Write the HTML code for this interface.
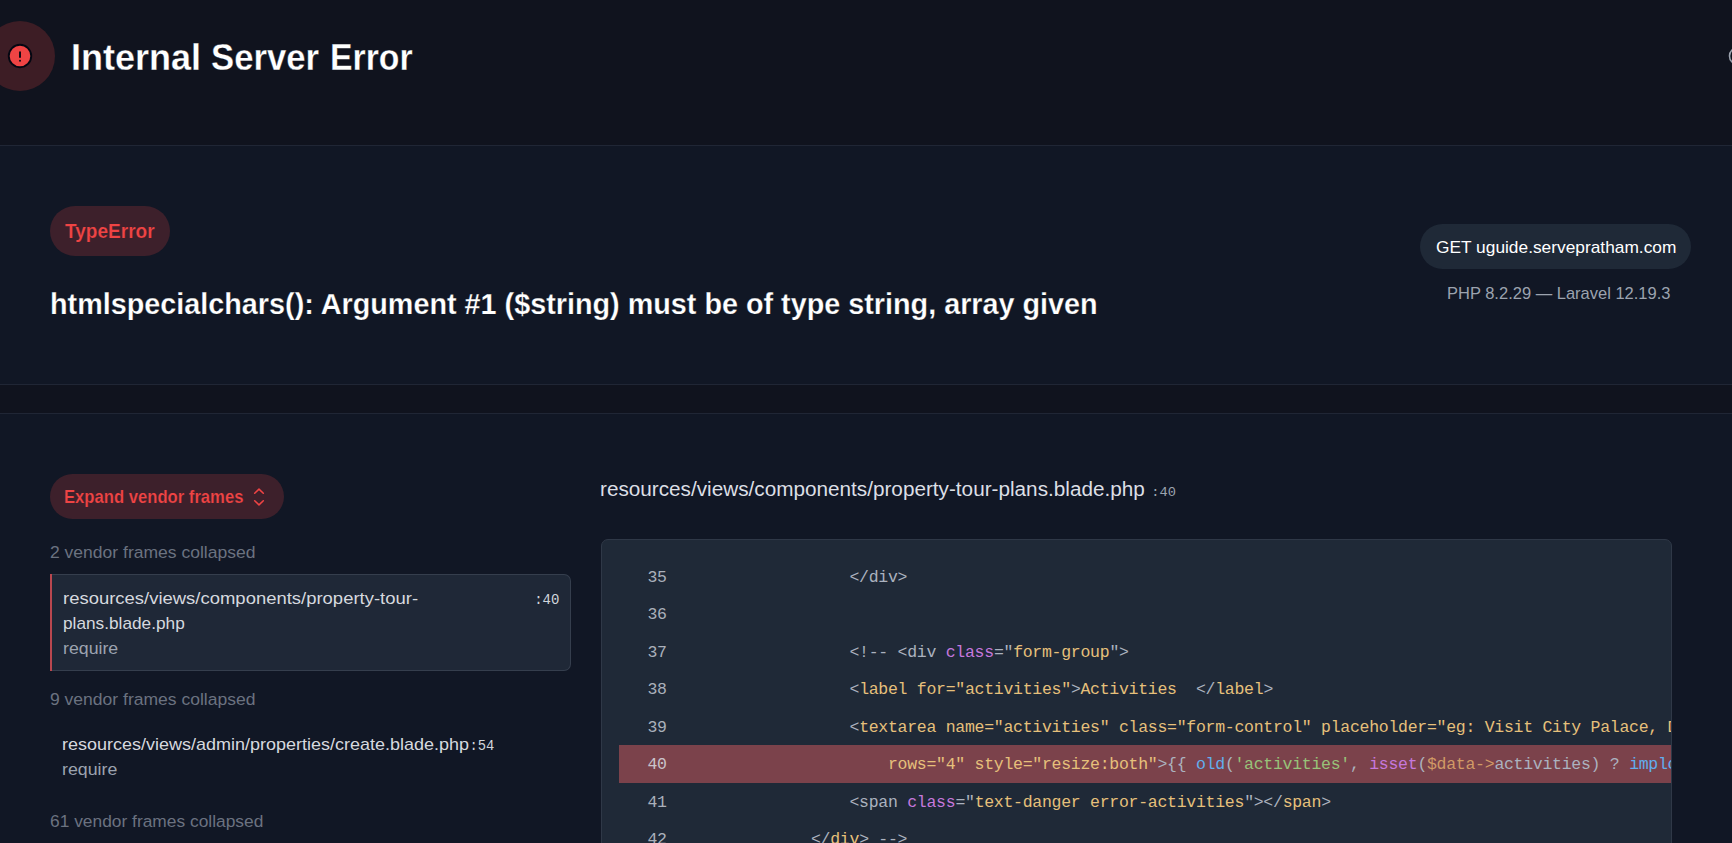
<!DOCTYPE html>
<html lang="en">
<head>
<meta charset="utf-8">
<title>Internal Server Error</title>
<style>
*{box-sizing:border-box;margin:0;padding:0}
html,body{width:1732px;height:843px;overflow:hidden;background:#10131e}
body{position:relative;font-family:"Liberation Sans",sans-serif;color:#fff}
.abs{position:absolute}
.t{position:absolute;white-space:nowrap;line-height:1;transform-origin:0 0}
.mono{font-family:"Liberation Mono","DejaVu Sans Mono",monospace}
#hdr{left:0;top:0;width:1732px;height:145px;background:#10131e}
#sec2{left:0;top:145px;width:1732px;height:240px;background:#111725;border-top:1px solid #202635;border-bottom:1px solid #202635}
#sec3{left:0;top:413px;width:1732px;height:430px;background:#111725;border-top:1px solid #202635}
#bigc{left:-15.5px;top:20.75px;width:70px;height:70px;border-radius:50%;background:#3d1d25}
#ico{left:5px;top:40.75px;width:30px;height:30px}
.tt{top:39px;font-size:37.5px;font-weight:700;-webkit-text-stroke:.3px #10131e}
#tw1{left:71px;transform:scaleX(.96)}#tw2{left:211px;transform:scaleX(.925)}#tw3{left:329.5px;transform:scaleX(.90)}
#pill1{left:50px;top:206px;width:120px;height:50px;border-radius:25px;background:#3d202b}
#terr{left:65px;top:221px;font-size:20px;font-weight:700;color:#ef4444;transform:scaleX(.952);-webkit-text-stroke:.2px #3d202b}
#msg{left:49.5px;top:289.25px;font-size:30px;font-weight:700;transform:scaleX(.959);-webkit-text-stroke:.25px #111725}
#getp{left:1420px;top:224px;width:271px;height:45px;border-radius:22.5px;background:#1f2937}
#gett{left:1436px;top:239.26px;font-size:17px;transform:scaleX(1.019)}
#ver{left:1447.3px;top:285.8px;font-size:16.6px;color:#9ca3af;transform:scaleX(.994)}
#exp{left:50px;top:474px;width:234px;height:45px;border-radius:22.5px;background:#3d202b}
#expt{left:64px;top:489px;font-size:17.5px;font-weight:700;color:#ef4444;transform:scaleX(.951);-webkit-text-stroke:.2px #3d202b}
#chev{left:250px;top:485px;width:17px;height:23px}
.vc{color:#6b7280;font-size:17.1px;transform:scaleX(1.025)}
#vc1{left:50px;top:544.25px}
#vc2{left:50px;top:691.3px}
#vc3{left:50px;top:812.5px;transform:scaleX(1.016)}
#card{left:50px;top:574px;width:521px;height:97px;background:#1f2837;border:1px solid #353e4d;border-left:0;border-radius:0 7px 7px 0}
.ft{font-size:17px;color:#d6d9df}
.fr{font-size:17px;color:#9ca3af}
.ln{font-size:13.6px;color:#d1d5db}
#f1a{left:62.9px;top:589.9px;transform:scaleX(1.086)}
#f1b{left:62.9px;top:614.9px;transform:scaleX(1.014)}
#f1c{left:62.9px;top:639.9px;transform:scaleX(1.043)}
#f1n{left:534.2px;top:593.2px;font-size:14px}
#f2a{left:62px;top:736.3px;transform:scaleX(1.058)}
#f2n{left:469.4px;top:739.7px;font-size:13.8px}
#f2c{left:62px;top:761.25px;transform:scaleX(1.045)}
#fh{left:600.2px;top:480.25px;font-size:19.5px;color:#dcdfe5;transform:scaleX(1.0626)}
#fhn{left:1151.3px;top:485.7px;font-size:13.7px;color:#9ca3af}
#code{left:601px;top:539px;width:1071px;height:320px;background:#1f2937;border:1px solid #2f3847;border-radius:7px;overflow:hidden}
#hl{left:17px;top:205px;width:1060px;height:38px;background:#7b424b}
.cl{position:absolute;left:0;height:37.5px;line-height:37.5px;white-space:pre;font-size:16.5px;letter-spacing:-.277px;color:#abb2bf}
.cl .n{position:absolute;left:45.5px;top:0;color:#aab0bb}
.cl .c{position:absolute;left:93.5px;top:0}
.k{color:#c678dd}.y{color:#e6c07b}.g{color:#98c379}.b{color:#61aeee}.o{color:#d19a66}
</style>
</head>
<body>
<div id="hdr" class="abs"></div>
<div id="sec2" class="abs"></div>
<div id="sec3" class="abs"></div>

<div id="bigc" class="abs"></div>
<svg id="ico" class="abs" viewBox="0 0 24 24" fill="#ef4444" stroke="#030712" stroke-width="1.5" stroke-linecap="round" stroke-linejoin="round"><path d="M12 9v3.75m9-.75a9 9 0 11-18 0 9 9 0 0118 0zm-9 3.75h.008v.008H12v-.008z"/></svg>
<div id="title"><span id="tw1" class="t tt">Internal </span><span id="tw2" class="t tt">Server </span><span id="tw3" class="t tt">Error</span></div>
<svg class="abs" style="left:1728px;top:46px;width:20px;height:20px" viewBox="0 0 20 20" fill="none" stroke="#9ca3af" stroke-width="1.6"><circle cx="10" cy="10" r="8.5"/></svg>

<div id="pill1" class="abs"></div>
<div id="terr" class="t">TypeError</div>
<div id="msg" class="t">htmlspecialchars(): Argument #1 ($string) must be of type string, array given</div>
<div id="getp" class="abs"></div>
<div id="gett" class="t">GET uguide.servepratham.com</div>
<div id="ver" class="t">PHP 8.2.29 — Laravel 12.19.3</div>

<div id="exp" class="abs"></div>
<div id="expt" class="t">Expand vendor frames</div>
<svg id="chev" class="abs" viewBox="0 0 17 23" fill="none" stroke="#ef4444" stroke-width="1.55" stroke-linecap="round" stroke-linejoin="round"><path d="M4.7 8.3L9 4.1l4.3 4.2M4.7 15.7L9 19.9l4.3-4.2"/></svg>

<div id="vc1" class="t vc">2 vendor frames collapsed</div>
<div id="card" class="abs"></div>
<div class="abs" style="left:50px;top:574px;width:1.6px;height:97px;background:#b9474f"></div>
<div id="f1a" class="t ft">resources/views/components/property-tour-</div>
<div id="f1b" class="t ft">plans.blade.php</div>
<div id="f1c" class="t fr">require</div>
<div id="f1n" class="t mono ln">:40</div>
<div id="vc2" class="t vc">9 vendor frames collapsed</div>
<div id="f2a" class="t ft">resources/views/admin/properties/create.blade.php</div>
<div id="f2n" class="t mono ln">:54</div>
<div id="f2c" class="t fr">require</div>
<div id="vc3" class="t vc">61 vendor frames collapsed</div>

<div id="fh" class="t">resources/views/components/property-tour-plans.blade.php</div>
<div id="fhn" class="t mono">:40</div>

<div id="code" class="abs mono">
<div id="hl" class="abs"></div>
<div class="cl" style="top:19px"><span class="n">35</span><span class="c">                &lt;/div&gt;</span></div>
<div class="cl" style="top:56px"><span class="n">36</span><span class="c"></span></div>
<div class="cl" style="top:94px"><span class="n">37</span><span class="c">                &lt;!-- &lt;div <span class="k">class</span>="<span class="y">form-group</span>"&gt;</span></div>
<div class="cl" style="top:131px"><span class="n">38</span><span class="c">                &lt;<span class="y">label for="activities"</span>&gt;<span class="y">Activities</span>  &lt;/<span class="y">label</span>&gt;</span></div>
<div class="cl" style="top:169px"><span class="n">39</span><span class="c">                &lt;<span class="y">textarea name="activities" class="form-control" placeholder="eg: Visit City Palace, D</span></span></div>
<div class="cl" style="top:206px"><span class="n" style="color:#c9c3ca">40</span><span class="c">                    <span class="y">rows="4" style="resize:both"</span>&gt;{{ <span class="b">old</span>(<span class="g">'activities'</span>, <span class="k">isset</span>(<span class="o">$data-&gt;</span>activities) ? <span class="b">implode</span></span></div>
<div class="cl" style="top:244px"><span class="n">41</span><span class="c">                &lt;span <span class="k">class</span>="<span class="y">text-danger error-activities</span>"&gt;&lt;/<span class="y">span</span>&gt;</span></div>
<div class="cl" style="top:281px"><span class="n">42</span><span class="c">            &lt;/<span class="y">div</span>&gt; --&gt;</span></div>
</div>
</body>
</html>
